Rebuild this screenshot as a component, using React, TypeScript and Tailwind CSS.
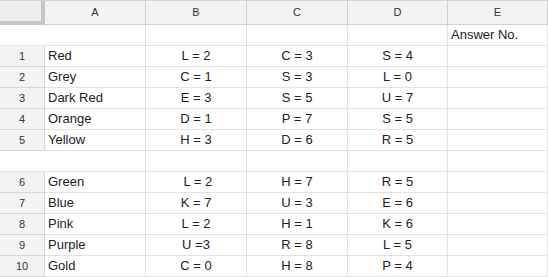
const columns = ['A', 'B', 'C', 'D', 'E'];
const colWidths = ['w-[101px]', 'w-[101px]', 'w-[101px]', 'w-[100px]', 'flex-1'];

type Row = { num?: number; cells: string[] };

const rows: Row[] = [
  { cells: ['', '', '', '', 'Answer No.'] },
  { num: 1, cells: ['Red', 'L = 2', 'C = 3', 'S = 4', ''] },
  { num: 2, cells: ['Grey', 'C = 1', 'S = 3', 'L = 0', ''] },
  { num: 3, cells: ['Dark Red', 'E = 3', 'S = 5', 'U = 7', ''] },
  { num: 4, cells: ['Orange', 'D = 1', 'P = 7', 'S = 5', ''] },
  { num: 5, cells: ['Yellow', 'H = 3', 'D = 6', 'R = 5', ''] },
  { cells: ['', '', '', '', ''] },
  { num: 6, cells: ['Green', '\u00a0L = 2', 'H = 7', 'R = 5', ''] },
  { num: 7, cells: ['Blue', 'K = 7', 'U = 3', 'E = 6', ''] },
  { num: 8, cells: ['Pink', 'L = 2', 'H = 1', 'K = 6', ''] },
  { num: 9, cells: ['Purple', 'U =3', 'R = 8', 'L = 5', ''] },
  { num: 10, cells: ['Gold', 'C = 0', 'H = 8', 'P = 4', ''] },
];

export default function App() {
  return (
    <div className="w-[548px] h-[277px] overflow-hidden bg-white font-['Liberation_Sans',Arial,sans-serif] text-[#222]">
      {/* Column headers */}
      <div className="flex h-[25px] bg-[#f3f3f3] border-t border-[#d4d4d4]">
        <div className="w-[45px] h-full border-r-4 border-b-4 border-[#c6c6c6] bg-[#eeeeee]" />
        {columns.map((c, i) => (
          <div
            key={c}
            className={`${colWidths[i]} h-full border-r border-b border-[#d0d0d0] flex items-center justify-center text-[11px] text-[#333]`}
          >
            {c}
          </div>
        ))}
      </div>

      {/* Data rows */}
      {rows.map((row, r) => (
        <div key={r} className="flex h-[21px]">
          {row.num !== undefined ? (
            <div className="w-[45px] h-full bg-[#f3f3f3] border-r border-b border-[#d6d6d6] flex items-center justify-center text-[11px] text-[#333]">
              {row.num}
            </div>
          ) : (
            <div className="w-[45px] h-full border-b border-[#e6e6e6]" />
          )}
          {row.cells.map((v, i) => (
            <div
              key={i}
              className={`${colWidths[i]} h-full border-r border-b border-[#e2e2e2] flex items-center text-[13px] whitespace-pre overflow-hidden ${
                i === 0 || i === 4 ? 'justify-start pl-[3px]' : 'justify-center'
              }`}
            >
              {v}
            </div>
          ))}
        </div>
      ))}
    </div>
  );
}
